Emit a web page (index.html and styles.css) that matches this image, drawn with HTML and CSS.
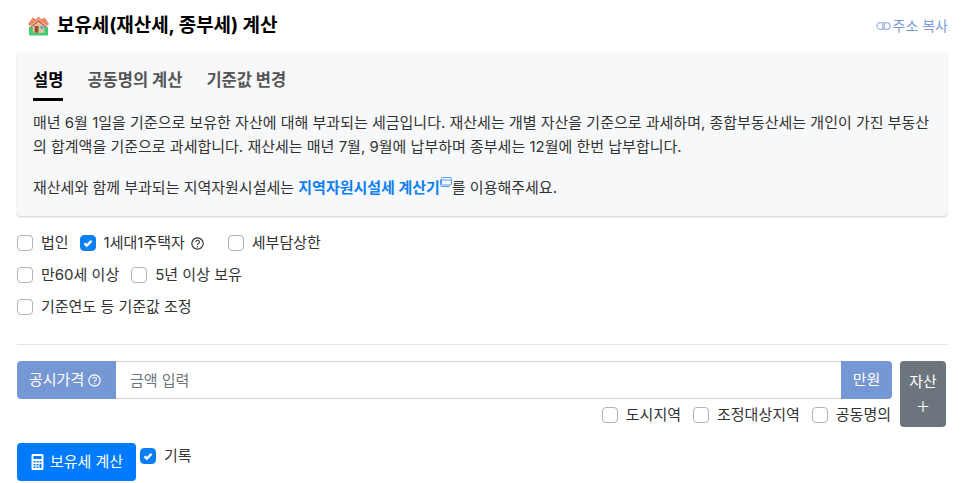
FILE: index.html
```html
<!DOCTYPE html>
<html lang="ko">
<head>
<meta charset="utf-8">
<title>보유세 계산</title>
<link rel="stylesheet" href="styles.css">
</head>
<body>
<main class="page">
  <header class="head">
    <h1 class="title">
      <svg class="emoji" viewBox="0 0 22 20" aria-hidden="true">
        <path fill="#43c978" d="M1 11h20v8a1 1 0 0 1-1 1H2a1 1 0 0 1-1-1z"/>
        <path fill="#e9c49a" d="M5 9l6-5 6 5v8H5z"/>
        <path fill="#8a5638" d="M7 10h4v7H7z"/>
        <path fill="#4fa8e8" d="M13 10h3v3h-3z"/>
        <path fill="#e58a62" d="M0 8l5-7 3.500 2L11 0l3 3 3.500-2L22 8l-2 2-9-7-9 7z"/>
        <path fill="#d4563e" d="M2.500 10.500L11 3.500l8.500 7-1 1L11 5.500l-7.500 6z"/>
      </svg>
      <span>보유세(재산세, 종부세) 계산</span>
    </h1>
    <a class="copy" href="#">
      <svg class="link-icon" viewBox="0 0 16 10" aria-hidden="true"><rect x="1" y="1.500" width="8" height="7" rx="3.500"/><rect x="7" y="1.500" width="8" height="7" rx="3.500"/></svg>
      <span>주소 복사</span>
    </a>
  </header>

  <section class="card">
    <nav class="tabs">
      <a class="tab active" href="#">설명</a>
      <a class="tab" href="#">공동명의 계산</a>
      <a class="tab" href="#">기준값 변경</a>
    </nav>
    <p class="para">매년 6월 1일을 기준으로 보유한 자산에 대해 부과되는 세금입니다. 재산세는 개별 자산을 기준으로 과세하며, 종합부동산세는 개인이 가진 부동산의 합계액을 기준으로 과세합니다. 재산세는 매년 7월, 9월에 납부하며 종부세는 12월에 한번 납부합니다.</p>
    <p class="para last">재산세와 함께 부과되는 지역자원시설세는 <a class="calc-link" href="#">지역자원시설세 계산기</a><svg class="ext" viewBox="0 0 12 10" aria-hidden="true"><rect x="1.500" y="0.500" width="10" height="7.500" rx="1"/><path d="M1.500 3h10"/><path d="M.5 2.500v6a1 1 0 0 0 1 1h8"/></svg>를 이용해주세요.</p>
  </section>

  <div class="options">
    <div class="opt-row tight">
      <label class="check"><span class="box"></span>법인</label>
      <label class="check"><span class="box on"><svg viewBox="0 0 16 16"><path d="M4 8.300l2.700 2.600L12 5.600"/></svg></span>1세대1주택자<svg class="help dark" viewBox="0 0 16 16"><circle cx="8" cy="8" r="7"/><path d="M5.800 6.300c0-3 4.500-3 4.500-.2 0 1.700-2.300 1.700-2.300 3.600"/><circle class="dot" cx="8" cy="12" r=".9"/></svg></label>
      <label class="check after-help"><span class="box"></span>세부담상한</label>
    </div>
    <div class="opt-row">
      <label class="check"><span class="box"></span>만60세 이상</label>
      <label class="check"><span class="box"></span>5년 이상 보유</label>
    </div>
    <div class="opt-row">
      <label class="check"><span class="box"></span>기준연도 등 기준값 조정</label>
    </div>
  </div>

  <hr class="rule">

  <div class="asset">
    <div class="asset-main">
      <div class="group">
        <span class="addon left">공시가격<svg class="help light" viewBox="0 0 16 16"><circle cx="8" cy="8" r="7"/><path d="M5.800 6.300c0-3 4.500-3 4.500-.2 0 1.700-2.300 1.700-2.300 3.600"/><circle class="dot" cx="8" cy="12" r=".9"/></svg></span>
        <input class="amount" type="text" placeholder="금액 입력">
        <span class="addon right">만원</span>
      </div>
      <div class="flags">
        <label class="check"><span class="box"></span>도시지역</label>
        <label class="check"><span class="box"></span>조정대상지역</label>
        <label class="check"><span class="box"></span>공동명의</label>
      </div>
    </div>
    <button class="add" type="button"><span>자산</span><span class="plus">+</span></button>
  </div>

  <div class="actions">
    <button class="submit" type="button">
      <svg class="calc" viewBox="0 0 12 16"><path fill-rule="evenodd" d="M1.500 0h9A1.500 1.500 0 0 1 12 1.500v13a1.500 1.500 0 0 1-1.500 1.500h-9A1.500 1.500 0 0 1 0 14.500v-13A1.500 1.500 0 0 1 1.500 0zM2 2v3h8V2zM2 7v1.500h2V7zM5 7v1.500h2V7zM8 7v1.500h2V7zM2 10v1.500h2V10zM5 10v1.500h2V10zM8 10v4h2v-4zM2 12.500V14h2v-1.500zM5 12.500V14h2v-1.500z"/></svg>
      보유세 계산</button>
    <label class="check record"><span class="box on"><svg viewBox="0 0 16 16"><path d="M4 8.300l2.700 2.600L12 5.600"/></svg></span>기록</label>
  </div>
</main>
</body>
</html>
```

FILE: styles.css
```css
* { box-sizing: border-box; }
html, body { margin: 0; padding: 0; background: #fff; }
body {
  font-family: Inter, "Noto Sans CJK KR", sans-serif;
  font-size: 15px;
  line-height: 22px;
  color: #212529;
  overflow: hidden;
}
.page { padding: 11px 22px 0 17px; width: 969px; }
a { text-decoration: none; }

.head { display: flex; justify-content: space-between; align-items: center; height: 30px; padding-left: 11px; }
.title { display: flex; align-items: center; gap: 8px; margin: 0; font-size: 19px; font-weight: 700; letter-spacing: -.06px; color: #000; }
.emoji { width: 21px; height: 20px; }
.copy { display: flex; align-items: center; gap: 2px; color: #7c9ad6; font-size: 14px; margin-right: -1px; }
.link-icon { width: 15px; height: 10px; fill: none; stroke: #9fb5e2; stroke-width: 1.300; }

.card {
  margin-top: 11px; height: 164px; padding: 12px 16px 0;
  background: #f7f8fa; border-radius: 4px;
  box-shadow: 0 1px 2px rgba(0, 0, 0, .2);
}
.tabs { display: flex; gap: 24px; height: 37px; }
.tab { height: 37px; font-size: 16.500px; line-height: 33px; font-weight: 700; color: #555; }
.tab.active { color: #000; border-bottom: 3px solid #000; }
.para { margin: 10px 0 0; line-height: 24px; color: #333; }
.para.last { margin-top: 17px; }
.calc-link { color: #0d7ff2; font-weight: 700; }
.ext { width: 12px; height: 10px; vertical-align: 6px; fill: none; stroke: #5a9cf0; stroke-width: 1; }

.options { margin-top: 16px; display: flex; flex-direction: column; gap: 10px; }
.opt-row { display: flex; height: 22px; align-items: center; gap: 12px; }
.opt-row.tight { gap: 11px; }
.check { display: inline-flex; align-items: center; color: #333; white-space: nowrap; }
.box { width: 16px; height: 16px; margin-right: 8px; border: 1px solid #adb5bd; border-radius: 4px; background: #fff; flex: none; }
.box.on { background: #0d7ff2; border-color: #0d7ff2; display: block; }
.box svg { display: block; width: 14px; height: 14px; fill: none; stroke: #fff; stroke-width: 2.800; }
.after-help { margin-left: 13px; }
.help { width: 13px; height: 13px; margin-left: 4px; fill: none; stroke-width: 1.400; }
.help.dark { margin-left: 6px; }
.help .dot { stroke: none; }
.help.dark { stroke: #333; }
.help.dark .dot { fill: #333; }
.help.light { stroke: #fff; }
.help.light .dot { fill: #fff; }

.rule { margin: 26px 0 16px; border: 0; border-top: 1px solid #e3e4e6; }

.asset { display: flex; gap: 8px; align-items: flex-start; padding-right: 1px; }
.asset-main { flex: 1; }
.group { display: flex; height: 38px; }
.addon { display: flex; align-items: center; background: #7597d4; color: #fff; }
.addon.left { width: 99px; padding-left: 12px; border-radius: 4px 0 0 4px; }
.addon.right { width: 51px; justify-content: center; border-radius: 0 4px 4px 0; }
.amount { flex: 1; min-width: 0; height: 38px; padding: 0 14px; border: 1px solid #ced4da; border-width: 1px 0; font: inherit; color: #333; outline: 0; }
.amount::placeholder { color: #6c757d; opacity: 1; }
.flags { display: flex; justify-content: flex-end; gap: 12px; margin-top: 5px; padding-right: 1px; }
.flags .check { height: 22px; }
.add { width: 46px; height: 66px; padding: 0; border: 0; border-radius: 4px; background: #6c757d; color: #fff; font: inherit; display: flex; flex-direction: column; align-items: center; justify-content: center; }
.plus { font-size: 24px; line-height: 24px; font-weight: 200; }

.actions { display: flex; align-items: flex-start; margin-top: 16px; }
.submit { display: flex; align-items: center; justify-content: center; gap: 6px; width: 119px; height: 38px; padding: 0 0 0 1px; border: 0; border-radius: 4px; background: #007bff; color: #fff; font: inherit; }
.calc { width: 13px; height: 16px; fill: #fff; }
.record { margin-left: 4px; height: 22px; margin-top: 2px; }
```
